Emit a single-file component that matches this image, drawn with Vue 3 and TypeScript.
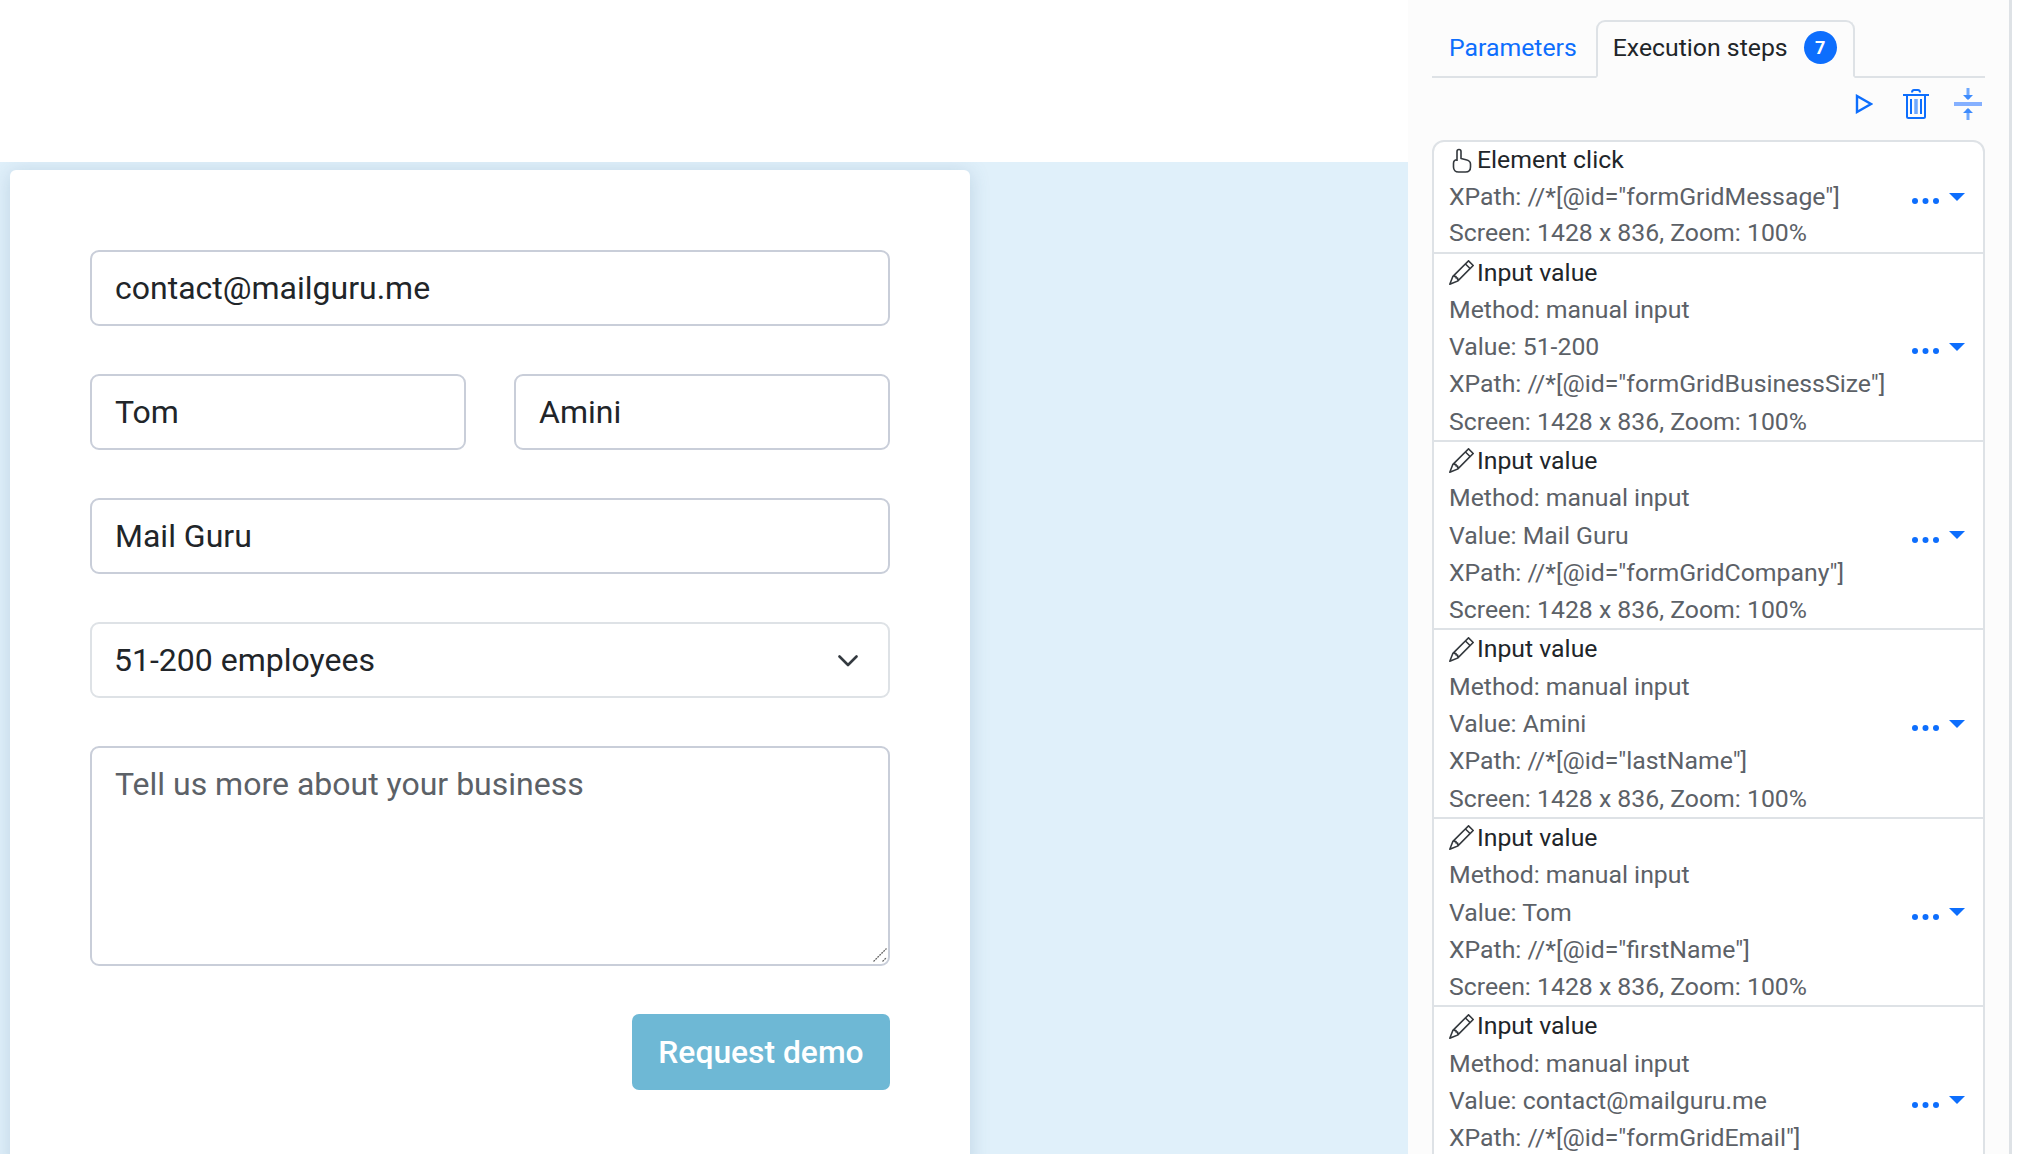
<script setup lang="ts">
interface Step {
  kind: 'click' | 'input';
  title: string;
  lines: string[];
}

const screen = 'Screen: 1428 x 836, Zoom: 100%';

const steps: Step[] = [
  { kind: 'click', title: 'Element click', lines: ['XPath: //*[@id="formGridMessage"]', screen] },
  {
    kind: 'input',
    title: 'Input value',
    lines: ['Method: manual input', 'Value: 51-200', 'XPath: //*[@id="formGridBusinessSize"]', screen]
  },
  {
    kind: 'input',
    title: 'Input value',
    lines: ['Method: manual input', 'Value: Mail Guru', 'XPath: //*[@id="formGridCompany"]', screen]
  },
  {
    kind: 'input',
    title: 'Input value',
    lines: ['Method: manual input', 'Value: Amini', 'XPath: //*[@id="lastName"]', screen]
  },
  {
    kind: 'input',
    title: 'Input value',
    lines: ['Method: manual input', 'Value: Tom', 'XPath: //*[@id="firstName"]', screen]
  },
  {
    kind: 'input',
    title: 'Input value',
    lines: ['Method: manual input', 'Value: contact@mailguru.me', 'XPath: //*[@id="formGridEmail"]']
  }
];
</script>

<template>
  <div class="page">
    <main class="preview">
      <form class="demo-form" @submit.prevent>
        <input class="field" type="text" value="contact@mailguru.me" />
        <div class="field-row">
          <input class="field" type="text" value="Tom" />
          <input class="field" type="text" value="Amini" />
        </div>
        <input class="field" type="text" value="Mail Guru" />
        <div class="select-wrap">
          <select class="field select">
            <option>51-200 employees</option>
          </select>
          <svg class="chevron" viewBox="0 0 20 12" width="20" height="12">
            <path d="M1.5 1.5 10 10l8.500-8.500" fill="none" stroke="#343a40" stroke-width="2.600" stroke-linecap="round" stroke-linejoin="round" />
          </svg>
        </div>
        <div class="message-wrap">
          <textarea class="field message" placeholder="Tell us more about your business"></textarea>
          <svg class="grip" viewBox="0 0 14 14" width="14" height="14">
            <path d="M0.5 13.500 13.500 0.5M9.500 13.500l4-4" stroke="#666" stroke-width="1.300" stroke-dasharray="2 0.8" fill="none" />
          </svg>
        </div>
        <div class="form-actions">
          <button class="submit" type="submit">Request demo</button>
        </div>
      </form>
    </main>

    <aside class="panel">
      <ul class="tabs">
        <li class="tab"><a href="#">Parameters</a></li>
        <li class="tab active">
          <a href="#">Execution steps</a>
          <span class="badge">7</span>
        </li>
      </ul>

      <div class="toolbar">
        <svg class="run" viewBox="0 0 18 20" width="18" height="20">
          <path d="M2 2v16l14-8z" fill="none" stroke="#0d6efd" stroke-width="2.400" stroke-linejoin="miter" />
        </svg>
        <svg viewBox="0 0 28 30" width="28" height="30">
          <path d="M1 6h26M10 3.500c0-1.500 1-2.500 2-2.500h4c1 0 2 1 2 2.500M5 7v20.500q0 1.500 1.500 1.500h15q1.500 0 1.500-1.500V7" fill="none" stroke="#0d6efd" stroke-width="2" />
          <path d="M9 10v15M19 10v15" fill="none" stroke="#0d6efd" stroke-width="2" />
          <path d="M14 10v15" fill="none" stroke="#6ea8fe" stroke-width="3.500" />
        </svg>
        <svg viewBox="0 0 28 32" width="28" height="32">
          <path d="M0 16h28" stroke="#85b0ff" stroke-width="4" />
          <path d="M14 0v11M14 21v11" stroke="#6ea8fe" stroke-width="3" />
          <path d="M9 7h10l-5 5zM9 25h10l-5-5z" fill="#3d8bfd" />
        </svg>
      </div>

      <div class="steps">
        <div v-for="(step, i) in steps" :key="i" class="step">
          <div class="step-body">
            <div class="step-title">
              <svg v-if="step.kind === 'click'" class="step-icon" viewBox="0 0 25 25">
                <path d="M8 13V3.500a2 2 0 0 1 4 0V10.500l5 1.200c2.500.6 4.500 1.800 4.500 4.300v3c0 3-2 5-5 5h-7c-3 0-5-2-5-5v-3.500c0-2.300 1.500-3.700 3.500-3.700M8 10.500" fill="none" stroke="#33383d" stroke-width="1.600" stroke-linejoin="round" />
              </svg>
              <svg v-else class="step-icon" viewBox="0 0 16 16" fill="#33383d">
                <path d="M12.146.146a.5.5 0 0 1 .708 0l3 3a.5.5 0 0 1 0 .708l-10 10a.5.5 0 0 1-.168.11l-5 2a.5.5 0 0 1-.65-.65l2-5a.5.5 0 0 1 .11-.168l10-10zM11.207 2.500 13.500 4.793 14.793 3.500 12.500 1.207 11.207 2.500zm1.586 3L10.500 3.207 4 9.707V10h.5a.5.5 0 0 1 .5.5v.5h.5a.5.5 0 0 1 .5.5v.5h.293l6.500-6.500zm-9.761 5.175-.106.106-1.528 3.821 3.821-1.528.106-.106A.5.5 0 0 1 5 12.500V12h-.5a.5.5 0 0 1-.5-.5V11h-.5a.5.5 0 0 1-.468-.325z" />
              </svg>
              <span>{{ step.title }}</span>
            </div>
            <div v-for="line in step.lines" :key="line" class="step-line">{{ line }}</div>
          </div>
          <div class="step-actions">
            <svg viewBox="0 0 28 6" width="28" height="6" class="dots">
              <circle cx="3" cy="3" r="3" fill="#0d6efd" />
              <circle cx="13.500" cy="3" r="3" fill="#0d6efd" />
              <circle cx="24" cy="3" r="3" fill="#0d6efd" />
            </svg>
            <svg viewBox="0 0 16 8" width="16" height="8">
              <path d="M0 0h16l-8 8z" fill="#0d6efd" />
            </svg>
          </div>
        </div>
      </div>
    </aside>
  </div>
</template>

<style>
html,
body {
  margin: 0;
  height: 100%;
  overflow: hidden;
  background: #fff;
}
</style>

<style scoped>
.page {
  display: grid;
  grid-template-columns: 1408px 604px;
  height: 1154px;
  overflow: hidden;
  font-family: Roboto, 'Liberation Sans', sans-serif;
  color: #212529;
}

.preview {
  margin-top: 162px;
  padding: 8px 0 0 10px;
  background: #e0f0fa;
  overflow: hidden;
}

.demo-form {
  box-sizing: border-box;
  display: flex;
  flex-direction: column;
  gap: 48px;
  width: 960px;
  min-height: 1000px;
  padding: 80px;
  background: #fff;
  border-radius: 6px;
  box-shadow: 0 2px 20px rgba(70, 110, 150, 0.22);
}

.field-row {
  display: grid;
  grid-template-columns: 376px 376px;
  gap: 48px;
}

.field {
  box-sizing: border-box;
  display: block;
  width: 100%;
  height: 76px;
  padding: 0 23px;
  border: 2px solid #c9ced9;
  border-radius: 9px;
  outline: none;
  background: #fff;
  color: #212529;
  font: 400 32px Roboto, 'Liberation Sans', sans-serif;
}

.select-wrap,
.message-wrap {
  position: relative;
}

.select {
  appearance: none;
  padding-left: 22px;
  border-color: #dee2e6;
}

.chevron {
  position: absolute;
  top: 33px;
  right: 32px;
  pointer-events: none;
}

.message {
  height: 220px;
  padding: 17px 23px;
  resize: none;
}

.message::placeholder {
  color: #5c6167;
  opacity: 1;
}

.grip {
  position: absolute;
  right: 3px;
  bottom: 4px;
  pointer-events: none;
}

.form-actions {
  display: flex;
  justify-content: flex-end;
}

.submit {
  width: 258px;
  height: 76px;
  border: 0;
  border-radius: 7px;
  background: #6eb8d5;
  color: #fff;
  font: 500 31.800px Roboto, 'Liberation Sans', sans-serif;
}

.panel {
  box-sizing: border-box;
  height: 1154px;
  padding: 20px 24px 0;
  background: #fcfcfc;
  border-right: 3px solid #dee2e6;
  overflow: hidden;
  font-size: 24.800px;
}

.tabs {
  display: flex;
  gap: 2px;
  height: 56px;
  margin: 0;
  padding: 0;
  list-style: none;
  border-bottom: 2px solid #dee2e6;
}

.tab {
  display: flex;
  align-items: center;
  box-sizing: border-box;
  height: 58px;
  padding: 0 15px 3px;
  border: 2px solid transparent;
  border-radius: 9px 9px 0 0;
}

.tab a {
  color: #0d6efd;
  text-decoration: none;
}

.tab.active {
  background: #fcfcfc;
  border-color: #dee2e6 #dee2e6 #fcfcfc;
  padding-right: 16px;
}

.tab.active a {
  color: #212529;
}

.badge {
  display: flex;
  align-items: center;
  justify-content: center;
  width: 33px;
  height: 33px;
  margin-left: 16px;
  border-radius: 50%;
  background: #0d6efd;
  color: #fff;
  font-size: 18px;
  font-weight: 700;
}

.toolbar {
  display: flex;
  align-items: center;
  justify-content: flex-end;
  gap: 24px;
  height: 52px;
  padding-right: 3px;
}

.run {
  margin-right: 5px;
}

.steps {
  margin-top: 10px;
  background: #fff;
  border: 2px solid #dee2e6;
  border-radius: 12px;
}

.step {
  box-sizing: border-box;
  display: flex;
  align-items: center;
  justify-content: space-between;
  padding: 0 18px 0 15px;
  border-top: 2px solid #dee2e6;
}

.step:first-child {
  border-top: 0;
}

.step:last-child {
  min-height: 188px;
}

.step-body {
  align-self: flex-start;
}

.step-title {
  display: flex;
  align-items: center;
  gap: 3px;
  line-height: 37.300px;
}

.step-icon {
  width: 25px;
  height: 25px;
}

.step-line {
  line-height: 37.300px;
  color: #5c6167;
}

.step:first-child .step-title,
.step:first-child .step-line {
  line-height: 36.500px;
}

.step-actions {
  display: flex;
  align-items: center;
  gap: 9px;
}

.dots {
  margin-top: 9px;
}
</style>
